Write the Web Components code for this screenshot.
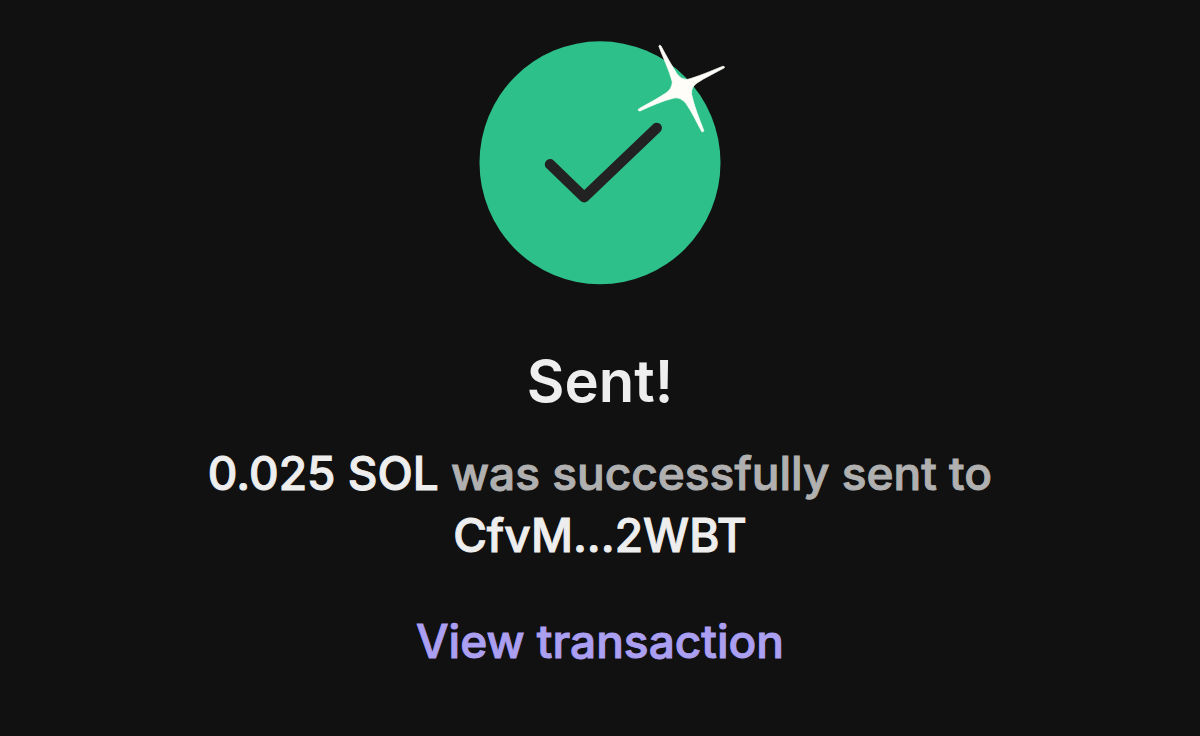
<!DOCTYPE html>
<html lang="en">
<head>
<meta charset="utf-8">
<title>Sent</title>
<style>
  body { margin: 0; background: #111111; font-family: Inter, "Liberation Sans", sans-serif; color: #eeeeee; }
</style>
</head>
<body>
<sent-screen>
  <success-badge slot="icon"></success-badge>
  <span slot="title">Sent!</span>
  <span slot="amount">0.025 SOL</span>
  <span slot="recipient">CfvM...2WBT</span>
  <text-link slot="action" href="#transaction">View transaction</text-link>
</sent-screen>
<script>
class SuccessBadge extends HTMLElement {
  constructor() {
    super();
    this.attachShadow({ mode: "open" }).innerHTML = `
      <style>
        :host { display: block; }
        svg { display: block; width: 260px; height: 248px; }
      </style>
      <svg viewBox="470 38 260 248" role="img" aria-label="Success">
        <ellipse cx="600" cy="162.800" rx="120.500" ry="121.500" fill="#2ec08b"/>
        <path d="M550 164.300 L584.200 197.300 L656.700 128" fill="none" stroke="#222222" stroke-width="10.500" stroke-linecap="round" stroke-linejoin="round"/>
        <path d="M658.800 46 Q659.500 44.300 661 46 C667 57 672 66 677 74 Q681 79.500 687 79.500 C697 77 711 71 723 66.200 Q725.300 66.500 724 68 C715 73 706 77 697 83 Q691 87 691.500 94 C694 106 699 118 703.800 130.500 Q703.300 132.800 701.700 131.500 C696 121 692 112 686 103.500 Q681 97 674 98 C662 101 651 106 640 111 Q637.500 111 638.500 109 C647 104 657 99 666 93 Q672 89 672.300 82 C669 69 663 58 658.800 46 Z" fill="#fffdf8" stroke="#fffdf8" stroke-width="0.700" stroke-linejoin="round"/>
      </svg>`;
  }
}
class TextLink extends HTMLElement {
  constructor() {
    super();
    this.attachShadow({ mode: "open" }).innerHTML = `
      <style>
        :host { display: block; }
        a { color: #ab9ff2; text-decoration: none; }
      </style>
      <a><slot></slot></a>`;
  }
  connectedCallback() {
    this.shadowRoot.querySelector("a").href = this.getAttribute("href");
  }
}
class SentScreen extends HTMLElement {
  constructor() {
    super();
    this.attachShadow({ mode: "open" }).innerHTML = `
      <style>
        :host { display: flex; flex-direction: column; align-items: center; box-sizing: border-box; min-height: 100vh; padding: 38px 24px; text-align: center; font-size: 46px; line-height: 62px; font-weight: 500; }
        h1 { margin: 59px 0 0; font-size: 58px; line-height: 72px; font-weight: 600; }
        p { margin: 25px 0 0; max-width: 840px; color: #b0b0b0; }
        p, nav { -webkit-text-stroke: 1px; }
        strong { font-weight: inherit; color: #eeeeee; -webkit-text-stroke-color: #eeeeee; }
        nav { margin-top: 44px; -webkit-text-stroke-color: #ab9ff2; }
      </style>
      <slot name="icon"></slot>
      <h1><slot name="title"></slot></h1>
      <p><strong><slot name="amount"></slot></strong> was successfully sent to <strong><slot name="recipient"></slot></strong></p>
      <nav><slot name="action"></slot></nav>`;
  }
}
customElements.define("success-badge", SuccessBadge);
customElements.define("text-link", TextLink);
customElements.define("sent-screen", SentScreen);
</script>
</body>
</html>
